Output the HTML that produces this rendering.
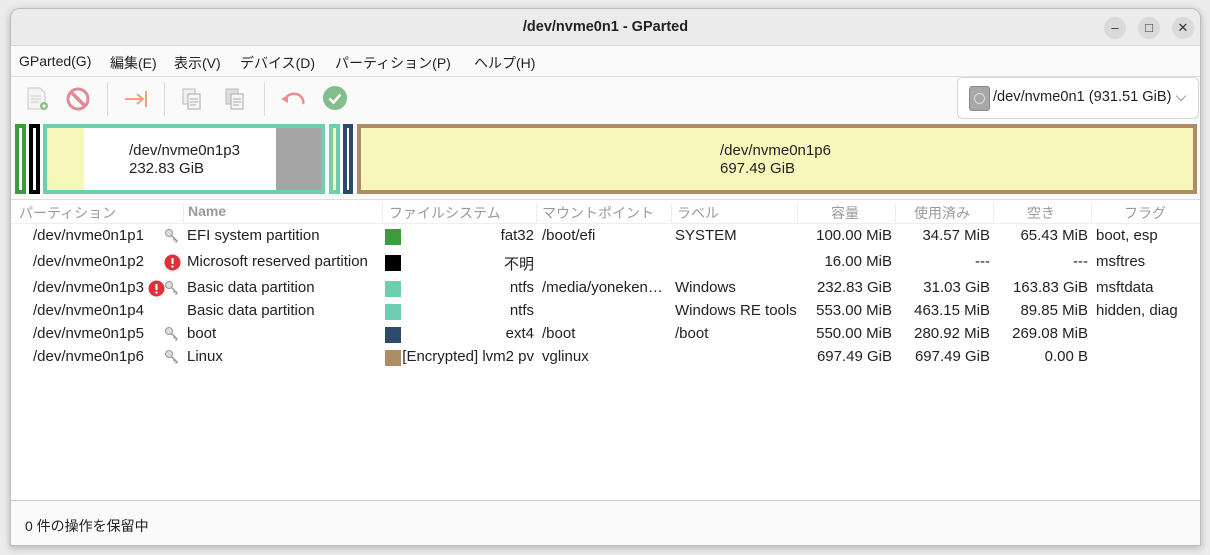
<!DOCTYPE html>
<html><head><meta charset="utf-8"><style>
*{box-sizing:border-box;margin:0;padding:0}
body{width:1210px;height:555px;background:#ececec;position:relative;overflow:hidden;font-family:"Liberation Sans","Noto Sans CJK JP",sans-serif;font-size:14px;color:#222}
.win{position:absolute;left:10px;top:8px;width:1191px;height:538px;background:#fafafa;border:1px solid #bdbdbd;border-radius:10px 10px 0 0;overflow:hidden;box-shadow:0 2px 8px rgba(0,0,0,.25)}
.a{position:absolute;white-space:nowrap}
.title{left:0;top:0;width:100%;height:37px;background:#ebebeb;border-bottom:1px solid #d8d8d8;text-align:center;line-height:37px;font-weight:bold;font-size:14.5px}
.wb{width:22px;height:22px;border-radius:50%;background:#dadada;top:8px;text-align:center;line-height:22px;font-size:13px;color:#333}
.menu{top:37px;left:0;width:100%;height:31px;border-bottom:1px solid #dedede;background:#fafafa}
.menu span{position:absolute;top:7px;font-size:14px}
.sep{width:1px;height:34px;background:#ddd;top:73px}
.b{position:absolute;border:4px solid}
.tbl{left:0;top:190px;width:100%;height:302px;background:#fff;border-top:1px solid #ddd;border-bottom:1px solid #c8c8c8}
.h{top:194px;color:#9a9a9a;font-size:14px}
.r{font-size:15px}
.sw{width:16px;height:16px}
.num{text-align:right}
</style></head><body>
<div class="win">
<div class="a title">/dev/nvme0n1 - GParted</div>
<div class="a wb" style="left:1093px">–</div>
<div class="a wb" style="left:1127px">□</div>
<div class="a wb" style="left:1161px">✕</div>
<div class="a menu">
<span style="left:8px">GParted(G)</span><span style="left:99px">編集(E)</span><span style="left:163px">表示(V)</span><span style="left:229px">デバイス(D)</span><span style="left:324px">パーティション(P)</span><span style="left:463px">ヘルプ(H)</span>
</div>
<svg class="a" style="left:14px;top:77px" width="26" height="26" viewBox="0 0 26 26"><path d="M3 2h12l5 5v16H3z" fill="#f4f4f4" stroke="#c8c8c8"/><path d="M6 10h10M6 13h10M6 16h8" stroke="#ccc"/><circle cx="19" cy="20" r="4" fill="#8bc18b"/><path d="M17 20h4M19 18v4" stroke="#fff"/></svg>
<svg class="a" style="left:55px;top:78px" width="24" height="24" viewBox="0 0 24 24"><circle cx="12" cy="12" r="10" fill="none" stroke="#e08a93" stroke-width="3"/><path d="M5 5l14 14" stroke="#e08a93" stroke-width="3.5"/></svg>
<div class="a sep" style="left:96px"></div>
<svg class="a" style="left:112px;top:80px" width="26" height="20" viewBox="0 0 26 20"><path d="M2 10h18M14 5l6 5-6 5" fill="none" stroke="#f2a080" stroke-width="2"/><path d="M23 2v16" stroke="#f2a080" stroke-width="2"/></svg>
<div class="a sep" style="left:153px"></div>
<svg class="a" style="left:170px;top:78px" width="22" height="26" viewBox="0 0 22 26"><rect x="2" y="2" width="12" height="15" fill="#f0f0f0" stroke="#bbb"/><rect x="7" y="7" width="12" height="15" fill="#f6f6f6" stroke="#aaa"/><path d="M9 12h8M9 15h8M9 18h6" stroke="#aab"/></svg>
<svg class="a" style="left:213px;top:77px" width="22" height="26" viewBox="0 0 22 26"><rect x="2" y="3" width="12" height="15" fill="#ddd" stroke="#bbb"/><rect x="7" y="8" width="12" height="15" fill="#f6f6f6" stroke="#aaa"/><path d="M9 13h8M9 16h8M9 19h6" stroke="#aab"/></svg>
<div class="a sep" style="left:253px"></div>
<svg class="a" style="left:268px;top:80px" width="28" height="20" viewBox="0 0 28 20"><path d="M6 11a9 8 0 0 1 18 4" fill="none" stroke="#f08c8c" stroke-width="2.5"/><path d="M2 10l7-4 0 8z" fill="#f08c8c"/></svg>
<svg class="a" style="left:312px;top:77px" width="24" height="24" viewBox="0 0 24 24"><circle cx="12" cy="12" r="12" fill="#83bd8b"/><path d="M6.5 12.5l4 4 7-8" fill="none" stroke="#fff" stroke-width="2.5"/></svg>
<div class="a" style="left:946px;top:68px;width:242px;height:42px;background:#fff;border:1px solid #d8d8d8;border-radius:6px"></div>
<div class="a" style="left:958px;top:77px;width:21px;height:25px;background:#a8a8a8;border:1px solid #888;border-radius:3px"><div style="position:absolute;left:4px;top:6px;width:11px;height:11px;border:1.5px solid #ddd;border-radius:50%"></div></div>
<div class="a" style="left:982px;top:80px;font-size:14.6px">/dev/nvme0n1 (931.51 GiB) <span style="color:#555">⌵</span></div>
<div class="b" style="left:4px;top:115px;width:11px;height:70px;border-color:#3d9a3d"></div>
<div class="b" style="left:18px;top:115px;width:11px;height:70px;border-color:#000"></div>
<div class="b" style="left:32px;top:115px;width:282px;height:70px;border-color:#6ecfb0;background:#fff"></div>
<div class="a" style="left:36px;top:119px;width:37px;height:62px;background:#f7f7bb"></div>
<div class="a" style="left:265px;top:119px;width:45px;height:62px;background:#a5a5a5"></div>
<div class="a" style="left:118px;top:133px;line-height:18px;font-size:15px">/dev/nvme0n1p3<br>232.83 GiB</div>
<div class="b" style="left:318px;top:115px;width:11px;height:70px;border-color:#6ecfb0;background:#f7f7bb"></div>
<div class="b" style="left:332px;top:115px;width:10px;height:70px;border-color:#2e4a6b"></div>
<div class="b" style="left:346px;top:115px;width:840px;height:70px;border-color:#ad8c66;background:#f7f7bb"></div>
<div class="a" style="left:709px;top:133px;line-height:18px;font-size:15px">/dev/nvme0n1p6<br>697.49 GiB</div>
<div class="a tbl"></div>
<div class="a" style="left:0;top:214px;width:100%;height:1px;background:#eee"></div>
<div class="a h" style="left:8px">パーティション</div>
<div class="a h" style="left:177px;font-weight:bold">Name</div>
<div class="a h" style="left:378px">ファイルシステム</div>
<div class="a h" style="left:531px">マウントポイント</div>
<div class="a h" style="left:666px">ラベル</div>
<div class="a h" style="left:820px">容量</div>
<div class="a h" style="left:903px">使用済み</div>
<div class="a h" style="left:1016px">空き</div>
<div class="a h" style="left:1113px">フラグ</div>
<div class="a" style="left:172px;top:194px;width:1px;height:20px;background:#eee"></div>
<div class="a" style="left:371px;top:194px;width:1px;height:20px;background:#eee"></div>
<div class="a" style="left:525px;top:194px;width:1px;height:20px;background:#eee"></div>
<div class="a" style="left:660px;top:194px;width:1px;height:20px;background:#eee"></div>
<div class="a" style="left:786px;top:194px;width:1px;height:20px;background:#eee"></div>
<div class="a" style="left:884px;top:194px;width:1px;height:20px;background:#eee"></div>
<div class="a" style="left:982px;top:194px;width:1px;height:20px;background:#eee"></div>
<div class="a" style="left:1080px;top:194px;width:1px;height:20px;background:#eee"></div>
<div id="rows"></div>
<div class="a" style="left:14px;top:507px;font-size:14px">0 件の操作を保留中</div>
</div>
<script>
const rows=[
[219,"p1","k","EFI system partition","#3d9a3d","fat32","/boot/efi","SYSTEM","100.00 MiB","34.57 MiB","65.43 MiB","boot, esp"],
[245,"p2","e","Microsoft reserved partition","#000","不明","","","16.00 MiB","---","---","msftres"],
[271,"p3","ek","Basic data partition","#6ecfb0","ntfs","/media/yoneken…","Windows","232.83 GiB","31.03 GiB","163.83 GiB","msftdata"],
[294,"p4","","Basic data partition","#6ecfb0","ntfs","","Windows RE tools","553.00 MiB","463.15 MiB","89.85 MiB","hidden, diag"],
[317,"p5","k","boot","#2e4a6b","ext4","/boot","/boot","550.00 MiB","280.92 MiB","269.08 MiB",""],
[340,"p6","k","Linux","#ad8c66","[Encrypted] lvm2 pv","vglinux","","697.49 GiB","697.49 GiB","0.00 B",""]];
const key='<svg width="16" height="16" viewBox="0 0 16 16"><circle cx="5" cy="5" r="3.5" fill="#ddd" stroke="#999"/><path d="M7.5 7.5l6 6M11 11l-1.5 1.5M13 13l-1.5 1.5" stroke="#999" stroke-width="1.5"/></svg>';
const err='<svg width="17" height="17" viewBox="0 0 17 17"><circle cx="8.5" cy="8.5" r="8" fill="#e0303a"/><path d="M8.5 4v6" stroke="#fff" stroke-width="2"/><circle cx="8.5" cy="12.5" r="1.1" fill="#fff"/></svg>';
let h='';
for(const r of rows){const y=r[0]-1;
h+=`<div class="a r" style="left:22px;top:${y}px">/dev/nvme0n1${r[1]}</div>`;
if(r[2]=="k")h+=`<div class="a" style="left:153px;top:${y+1}px">${key}</div>`;
if(r[2]=="e")h+=`<div class="a" style="left:153px;top:${y+1}px">${err}</div>`;
if(r[2]=="ek")h+=`<div class="a" style="left:137px;top:${y+1}px">${err}</div><div class="a" style="left:153px;top:${y+1}px">${key}</div>`;
h+=`<div class="a r" style="left:176px;top:${y}px">${r[3]}</div>`;
h+=`<div class="a sw" style="left:374px;top:${y+2}px;background:${r[4]}"></div>`;
h+=`<div class="a r num" style="left:380px;width:143px;top:${y}px">${r[5]}</div>`;
h+=`<div class="a r" style="left:531px;top:${y}px">${r[6]}</div>`;
h+=`<div class="a r" style="left:664px;top:${y}px">${r[7]}</div>`;
h+=`<div class="a r num" style="left:780px;width:101px;top:${y}px">${r[8]}</div>`;
h+=`<div class="a r num" style="left:880px;width:99px;top:${y}px">${r[9]}</div>`;
h+=`<div class="a r num" style="left:978px;width:99px;top:${y}px">${r[10]}</div>`;
h+=`<div class="a r" style="left:1085px;top:${y}px">${r[11]}</div>`;}
document.getElementById('rows').outerHTML=h;
</script>
</body></html>
